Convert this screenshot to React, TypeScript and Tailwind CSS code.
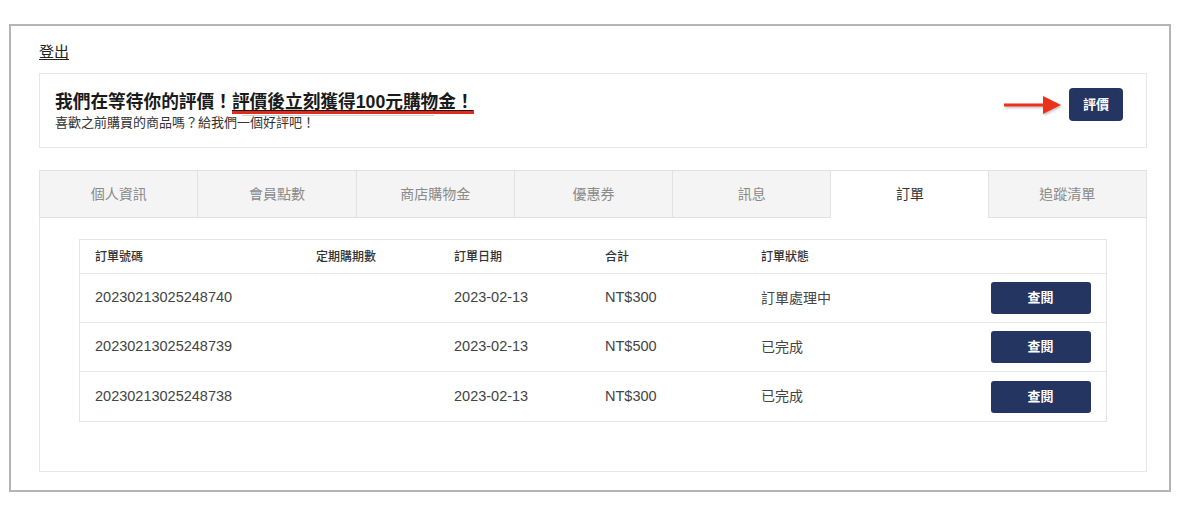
import React from "react"

const tabs = ["個人資訊", "會員點數", "商店購物金", "優惠券", "訊息", "訂單", "追蹤清單"]

const orders = [
  { id: "20230213025248740", date: "2023-02-13", total: "NT$300", status: "訂單處理中" },
  { id: "20230213025248739", date: "2023-02-13", total: "NT$500", status: "已完成" },
  { id: "20230213025248738", date: "2023-02-13", total: "NT$300", status: "已完成" },
]

const font = { fontFamily: '"Liberation Sans", "Noto Sans CJK TC", sans-serif' }

const Arrow = () => (
  <svg width="60" height="22" viewBox="0 0 60 22" className="mr-[6px]">
    <defs>
      <filter id="sh" x="-10%" y="-30%" width="130%" height="180%">
        <feDropShadow dx="1" dy="1.5" stdDeviation="1" floodColor="#000" floodOpacity="0.25" />
      </filter>
    </defs>
    <g filter="url(#sh)">
      <rect x="1" y="9.5" width="42" height="3" fill="#e8321f" />
      <path d="M40 2 L58 11 L40 20 Z" fill="#e8321f" />
    </g>
  </svg>
)

export default function App() {
  return (
    <div className="w-[1200px] h-[514px] bg-white pt-[24px] pl-[9px]" style={font}>
      <div className="w-[1162px] h-[468px] border-2 border-[#b4b4b4] pl-[28px] pt-[14px]">
        <div className="w-[1108px]">
          <a href="#" className="text-[15px] leading-[20px] text-[#222] underline underline-offset-2">
            登出
          </a>

          {/* review banner */}
          <div className="mt-[9px] h-[75px] border border-[#e6e6e6] flex items-center justify-between pl-[15px] pr-[23px]">
            <div className="pt-[1px]">
              <p className="text-[17.7px] leading-[22px] font-bold text-[#1a1a1a]">
                我們在等待你的評價！
                <span className="relative underline underline-offset-[2px] decoration-1">
                  評價後立刻獲得100元購物金！
                  <span className="absolute left-0 right-0 top-[19px] h-[3px] bg-[#e02a1b]" />
                  <span className="absolute left-[10px] right-[40px] top-[23px] h-[1px] bg-[#d4d4d4]" />
                </span>
              </p>
              <p className="text-[13px] leading-[17px] text-[#333] mt-[1px]">喜歡之前購買的商品嗎？給我們一個好評吧！</p>
            </div>
            <div className="flex items-center mb-[12px]">
              <Arrow />
              <button className="w-[54px] h-[33px] rounded-[4px] bg-[#253561] text-white text-[13px] font-bold">
                評價
              </button>
            </div>
          </div>

          {/* tabs */}
          <div className="mt-[22px] flex">
            {tabs.map((t) => {
              const active = t === "訂單"
              return (
                <div
                  key={t}
                  className={
                    active
                      ? "flex-1 h-[48px] flex items-center justify-center bg-white border-t border-[#e2e2e2] text-[14px] text-[#333]"
                      : "flex-1 h-[48px] flex items-center justify-center bg-[#f4f4f4] border border-[#e2e2e2] -ml-px first:ml-0 text-[14px] text-[#8a8a8a]"
                  }
                >
                  {t}
                </div>
              )
            })}
          </div>

          {/* orders panel */}
          <div className="h-[254px] border border-t-0 border-[#e6e6e6] pl-[39px] pt-[21px]">
            <div className="w-[1028px] border border-[#e4e4e4]">
              <div className="grid grid-cols-[221px_138px_151px_156px_229px_1fr] h-[34px] items-center border-b border-[#e8e8e8] text-[12px] font-medium text-[#333]">
                <div className="pl-[15px]">訂單號碼</div>
                <div className="pl-[15px]">定期購期數</div>
                <div className="pl-[15px]">訂單日期</div>
                <div className="pl-[15px]">合計</div>
                <div className="pl-[15px]">訂單狀態</div>
                <div />
              </div>
              {orders.map((o, i) => (
                <div
                  key={o.id}
                  className={
                    "grid grid-cols-[221px_138px_151px_156px_229px_1fr] h-[49px] items-center text-[14.5px] text-[#444]" +
                    (i < orders.length - 1 ? " border-b border-[#e8e8e8]" : "")
                  }
                >
                  <div className="pl-[15px]">{o.id}</div>
                  <div />
                  <div className="pl-[15px]">{o.date}</div>
                  <div className="pl-[15px]">{o.total}</div>
                  <div className="pl-[15px] text-[14px]">{o.status}</div>
                  <div className="flex justify-center">
                    <button className="w-[100px] h-[32px] rounded-[3px] bg-[#253561] text-white text-[13px] font-bold">
                      查閱
                    </button>
                  </div>
                </div>
              ))}
            </div>
          </div>
        </div>
      </div>
    </div>
  )
}
